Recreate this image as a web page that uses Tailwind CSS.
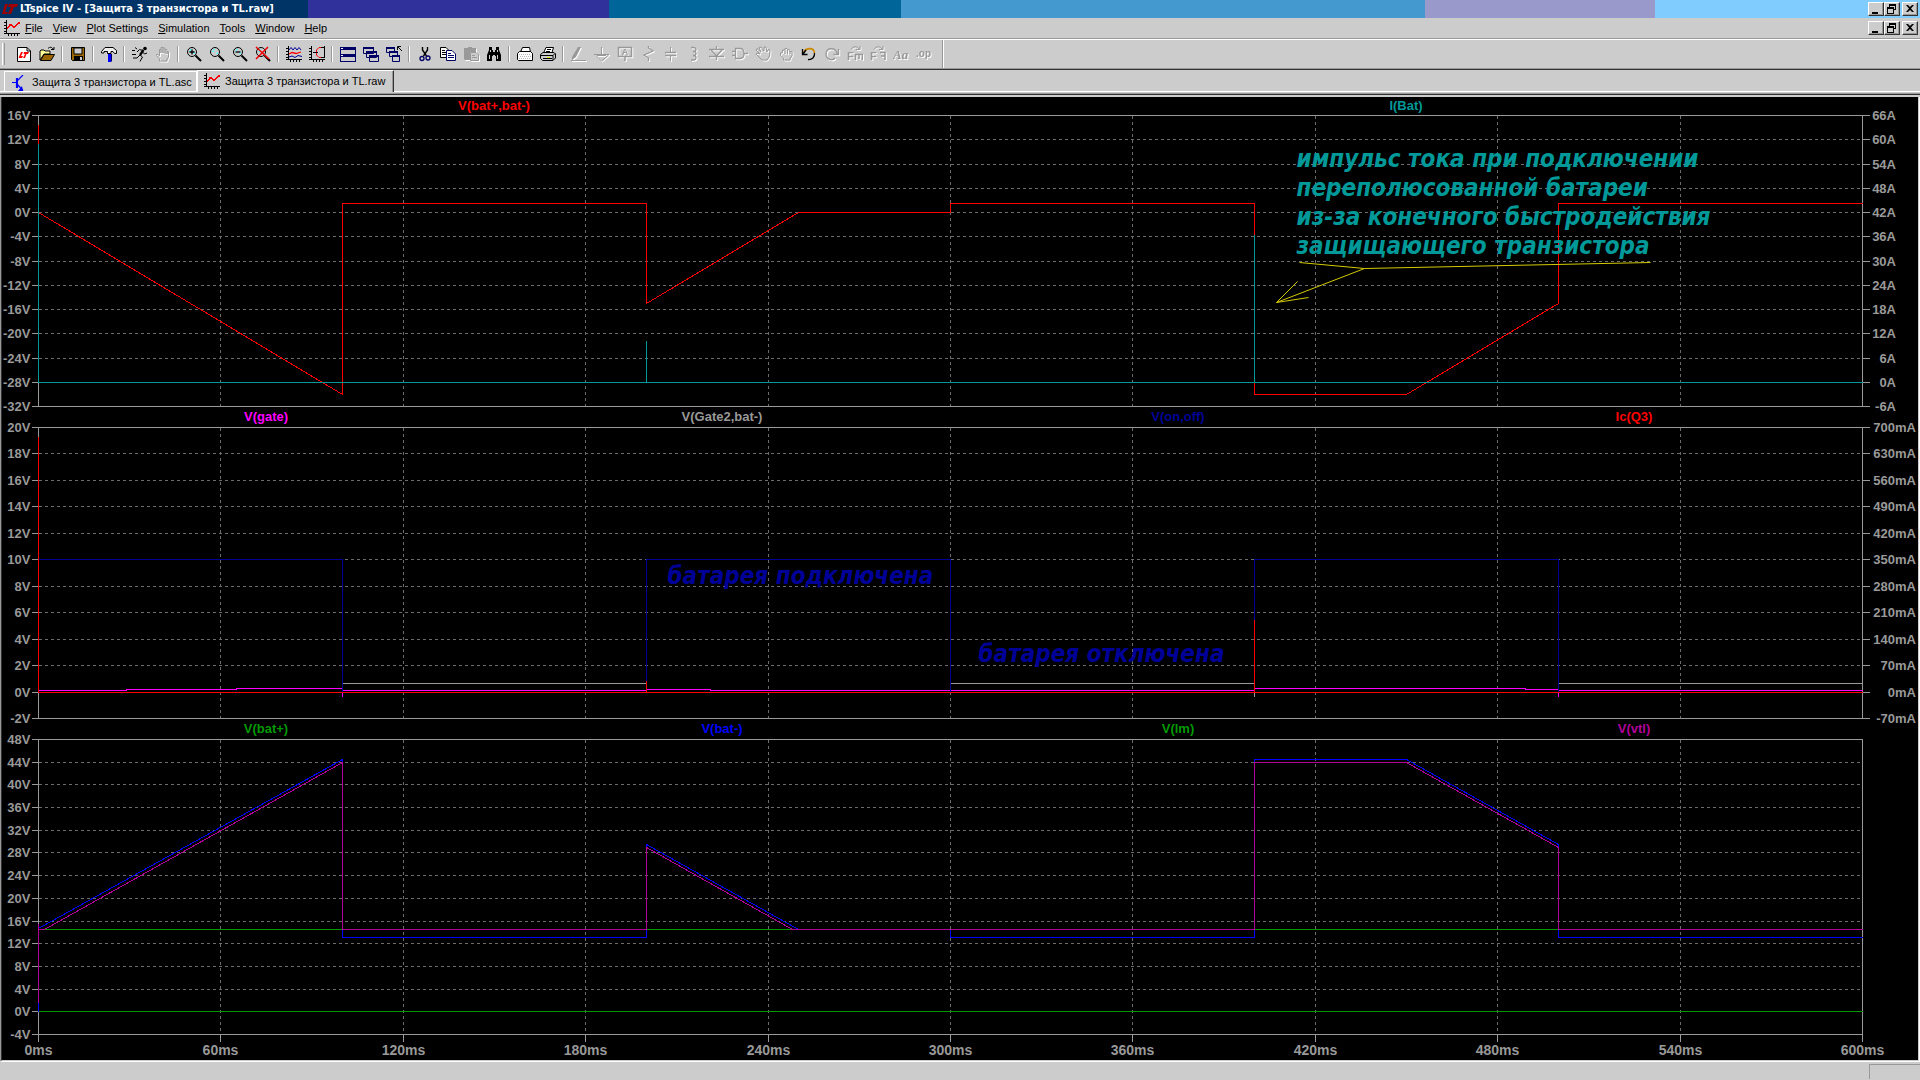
<!DOCTYPE html>
<html lang="ru">
<head>
  <meta charset="UTF-8" />
  <meta name="viewport" content="width=device-width, initial-scale=1.0" />
  <title>LTspice IV - [Защита 3 транзистора и TL.raw]</title>
  <script src="https://cdn.jsdelivr.net/npm/@tailwindcss/browser@4"></script>
</head>
<body class="bg-[#cccccc] text-black font-['Liberation_Sans',sans-serif] text-[11px]">

  <!-- Shared icons -->
  <svg class="hidden" aria-hidden="true">
    <symbol id="i-wave" viewBox="0 0 16 16">
      <path d="M2.500 0V14M0 2.500H2M0 5.500H2M0 8.500H2M0 11.500H2M0 13.500H16M4.500 14V16M7.500 14V16M10.500 14V16M13.500 14V16" stroke="#000" fill="none" />
      <path d="M3 8L4 7.500L6 5L7 4.500L8 5.500L10 7L12 5.500L14 3.500L16 2.500" stroke="#f00" stroke-width="1.500" fill="none" />
    </symbol>
    <symbol id="i-lens" viewBox="0 0 16 16">
      <circle cx="6" cy="6" r="4.500" fill="#ccc" stroke="#000" />
      <path d="M3 5H4V3H6V4H5V6H3ZM7 8H9V6H8V7H7Z" fill="#6ff" />
      <path d="M9.500 9.500L15 15" stroke="#000" stroke-width="2" />
    </symbol>
    <symbol id="i-hand" viewBox="0 0 16 16">
      <path d="M4.500 15V13L1.500 9.500V8.500H3L4.500 10V3.500H6V7V1.500H8V7V2H10V7.500V3.500H12V8V5.500H13.500V11L12 13V15Z" fill="none" stroke="currentColor" />
    </symbol>
    <symbol id="i-min" viewBox="0 0 12 10"><path d="M2 8H8V10H2Z" /></symbol>
    <symbol id="i-restore" viewBox="0 0 12 10">
      <path d="M3 0H10V6H8V5H9V2H4V3H3ZM1 3H8V10H1ZM2 5V9H7V5Z" fill-rule="evenodd" />
    </symbol>
    <symbol id="i-close" viewBox="0 0 12 10"><path d="M2 1H4L6 3L8 1H10L7 4.500L10 8H8L6 6L4 8H2L5 4.500Z" /></symbol>
  </svg>

  <div class="flex h-screen min-h-[600px] flex-col overflow-hidden">

    <!-- Title bar -->
    <header class="flex h-[18px] shrink-0 items-center bg-[linear-gradient(90deg,#003366_16.04%,#31319c_16.04%_31.72%,#006699_31.72%_46.93%,#4499cf_46.93%_74.22%,#9999cc_74.22%_86.2%,#80ccff_86.2%)] pl-0.5 pr-0.5">
      <svg class="mr-0.5 h-4 w-4" viewBox="0 0 16 16" fill="#a00000">
        <path d="M3 3H6L3 11H6L5 13H0ZM7 3H16L15 6H12L9 13H6L9 6H6Z" />
      </svg>
      <h1 class="flex-1 truncate font-['DejaVu_Sans_Condensed','DejaVu_Sans',sans-serif] text-[11px] font-bold text-white">LTspice IV - [Защита 3 транзистора и TL.raw]</h1>
      <div class="flex">
        <button aria-label="Minimize" class="h-3.5 w-4 border border-white border-b-[#333] border-r-[#333] bg-[#cccccc] p-px shadow-[inset_-1px_-1px_0_#999]"><svg class="h-2.5 w-3"><use href="#i-min" /></svg></button>
        <button aria-label="Restore" class="h-3.5 w-4 border border-white border-b-[#333] border-r-[#333] bg-[#cccccc] p-px shadow-[inset_-1px_-1px_0_#999]"><svg class="h-2.5 w-3"><use href="#i-restore" /></svg></button>
        <button aria-label="Close" class="ml-0.5 h-3.5 w-4 border border-white border-b-[#333] border-r-[#333] bg-[#cccccc] p-px shadow-[inset_-1px_-1px_0_#999]"><svg class="h-2.5 w-3"><use href="#i-close" /></svg></button>
      </div>
    </header>

    <!-- Menu -->
    <nav class="flex h-[21px] shrink-0 items-center border-b border-[#999] pl-1 pr-0.5">
      <svg class="mr-[5px] h-4 w-4" shape-rendering="crispEdges"><use href="#i-wave" /></svg>
      <div class="flex flex-1 gap-2.5">
        <button><u>F</u>ile</button>
        <button><u>V</u>iew</button>
        <button><u>P</u>lot Settings</button>
        <button><u>S</u>imulation</button>
        <button><u>T</u>ools</button>
        <button><u>W</u>indow</button>
        <button><u>H</u>elp</button>
      </div>
      <div class="flex">
        <button aria-label="Minimize plot" class="h-3.5 w-4 border border-white border-b-[#333] border-r-[#333] p-px shadow-[inset_-1px_-1px_0_#999]"><svg class="h-2.5 w-3"><use href="#i-min" /></svg></button>
        <button aria-label="Restore plot" class="h-3.5 w-4 border border-white border-b-[#333] border-r-[#333] p-px shadow-[inset_-1px_-1px_0_#999]"><svg class="h-2.5 w-3"><use href="#i-restore" /></svg></button>
        <button aria-label="Close plot" class="ml-0.5 h-3.5 w-4 border border-white border-b-[#333] border-r-[#333] p-px shadow-[inset_-1px_-1px_0_#999]"><svg class="h-2.5 w-3"><use href="#i-close" /></svg></button>
      </div>
    </nav>

    <!-- Toolbar -->
    <div class="flex h-[30px] shrink-0 items-center border-b border-t border-b-[#999] border-t-white pl-0.5 [&>button]:flex [&>button]:h-6 [&>button]:w-[23px] [&>button]:shrink-0 [&>button]:items-center [&>button]:justify-center [&>button>svg]:h-4 [&>button>svg]:w-4 [&>i]:mx-[3px] [&>i]:h-4 [&>i]:w-0.5 [&>i]:shrink-0 [&>i]:border-l [&>i]:border-r [&>i]:border-l-[#999] [&>i]:border-r-white [&>button:disabled]:text-[#999] [&>button:disabled>svg]:drop-shadow-[1px_1px_0_#fff]">
      <span class="mr-[7px] h-[22px] w-[3px] border-l border-r border-l-white border-r-[#999]"></span>
      <button aria-label="New schematic"><svg viewBox="0 0 16 16"><path d="M1.500 1.500H11L14.500 5V15.500H1.500Z" fill="#fff" stroke="#000" /><path d="M11 1.500V5H14.500" fill="none" stroke="#000" /><path d="M5 6H7L5 10H7L6 12H2.500ZM8 6H13L12 8H10.500L9 12H7L9 8H7.500Z" fill="#f00" /></svg></button>
      <button aria-label="Open"><svg viewBox="0 0 16 16"><path d="M1 14V5L2 4H5L6 5H11V8H5Z" fill="#ffff99" stroke="#000" /><path d="M1.500 14.500L5 8.500H15.500L12 14.500Z" fill="#996600" stroke="#000" /><path d="M9 2.500C11 0.500 13 1 14.500 3.500M12 3.500H15V1" fill="none" stroke="#000" /></svg></button>
      <i></i>
      <button aria-label="Save"><svg viewBox="0 0 16 16"><path d="M1.500 1.500H14.500V14.500H2.500L1.500 13.500Z" fill="#996600" stroke="#000" /><path d="M4 2H12V8H4Z" fill="#ccc" stroke="#000" /><path d="M4 10H13V15H4Z" /><path d="M10 11H12V14H10Z" fill="#ccc" /></svg></button>
      <i></i>
      <button aria-label="Control panel"><svg viewBox="0 0 16 16"><path d="M.500 5.500L4 1.500H12L15.500 4.500V7.500H13.500L12 5.500H10V7.500H6.500V5.500H3V7H.500Z" fill="#eee" stroke="#000" /><path d="M7 8H10V16H7Z" fill="#00f" /><path d="M10.500 8V15.500" stroke="#006" /></svg></button>
      <i></i>
      <button aria-label="Run"><svg viewBox="0 0 16 16"><circle cx="13" cy="2.500" r="1.800" /><path d="M11.500 4L8 9" stroke="#000" stroke-width="2.200" /><path d="M8 9L10.500 11L8 15.500M8 9L5 12H1M11 4.500L7.500 3.500L5 6M10.500 6L12.500 8L15 7M3 1.500L5 3M0 4.500H3M0 8.500H4" fill="none" stroke="#000" /></svg></button>
      <button aria-label="Halt" disabled><svg><use href="#i-hand" /></svg></button>
      <i></i>
      <button aria-label="Zoom in"><svg viewBox="0 0 16 16"><use href="#i-lens" /><path d="M6 3.500V8.500M3.500 6H8.500" stroke="#000" stroke-width="1.300" /></svg></button>
      <button aria-label="Pan"><svg><use href="#i-lens" /></svg></button>
      <button aria-label="Zoom out"><svg viewBox="0 0 16 16"><use href="#i-lens" /><path d="M3.500 6H8.500" stroke="#000" stroke-width="1.300" /></svg></button>
      <button aria-label="Zoom full extents"><svg viewBox="0 0 16 16"><use href="#i-lens" /><path d="M1 1L14 13M13 1L1 13" stroke="#e00" stroke-width="1.500" /></svg></button>
      <i></i>
      <button aria-label="Autorange Y"><svg viewBox="0 0 16 16" fill="none"><path d="M2.500 0V14M0 2.500H2M0 5.500H2M0 8.500H2M0 11.500H2M0 13.500H16M4.500 14V16M7.500 14V16M10.500 14V16M13.500 14V16" stroke="#000" /><path d="M3 4L5 1.500L7 4L9 1.500L11 4L13 1.500L15 4M3 11L6 10L9 11.500L12 9.500L16 10.500" stroke="#009" /><path d="M3 8L6 6.500L10 7.500L15 6" stroke="#f00" stroke-width="1.300" /></svg></button>
      <button aria-label="Plot settings"><svg viewBox="0 0 16 16" fill="none"><path d="M2.500 0V14M0 2.500H2M0 5.500H2M0 8.500H2M0 11.500H2M0 13.500H16M4.500 14V16M7.500 14V16M10.500 14V16M13.500 14V16" stroke="#000" /><path d="M12 1.500H10L7.500 4V9L10 11.500H12" stroke="#f00" /><path d="M15.500 0V12M4 6.500H9M12 1.500H15M12 11.500H15" stroke="#000" /></svg></button>
      <i></i>
      <button aria-label="Tile windows"><svg viewBox="0 0 16 16"><path d="M0 1H16V16H0Z" fill="#006" /><path d="M1 4H15V8H1ZM1 11H15V15H1Z" fill="#ccc" /><path d="M1 2H3V3H1ZM1 9H3V10H1Z" fill="#fff" /></svg></button>
      <button aria-label="Cascade windows"><svg viewBox="0 0 16 16" fill="#ccc" stroke="#006"><path d="M.500 1.500H10.500V7.500H.500ZM3.500 5.500H13.500V11.500H3.500ZM6.500 9.500H15.500V15.500H6.500Z" /><path d="M0 2H11M3 6H14M6 10H16" stroke-width="2" /></svg></button>
      <button aria-label="Close all windows"><svg viewBox="0 0 16 16" fill="#ccc" stroke="#006"><path d="M.500 1.500H8.500V6.500H.500ZM3.500 5.500H11.500V10.500H3.500ZM6.500 9.500H13.500V15.500H6.500Z" /><path d="M0 2H9M3 6H12M6 10H14" stroke-width="2" /><path d="M11.500 4V.500H15M12 1L16 5" fill="none" stroke="#000" /></svg></button>
      <i></i>
      <button aria-label="Cut"><svg viewBox="0 0 16 16" fill="none"><path d="M5.500 1V4L9.500 10M10.500 1V4L6.500 10" stroke="#000" stroke-width="1.400" /><circle cx="5" cy="12.500" r="2" stroke="#006" stroke-width="1.300" /><circle cx="11" cy="12" r="2" stroke="#006" stroke-width="1.300" /></svg></button>
      <button aria-label="Copy"><svg viewBox="0 0 16 16" fill="#fff"><path d="M.500 1.500H6L8.500 4V11.500H.500Z" stroke="#000" /><path d="M2 4.500H5M2 6.500H7M2 8.500H7" stroke="#000" /><path d="M6.500 4.500H12L15.500 8V14.500H6.500Z" stroke="#006" /><path d="M8 7.500H11M8 9.500H14M8 11.500H14" stroke="#006" /></svg></button>
      <button aria-label="Paste" disabled><svg viewBox="0 0 16 16"><path d="M1 2H5V1H9V2H13V6H7V14H2L1 13Z" fill="currentColor" /><path d="M7.500 6.500H13L15.500 9V14.500H7.500Z" fill="#ccc" stroke="currentColor" /><path d="M9 9.500H12M9 11.500H14M4 4.500H10" stroke="currentColor" /></svg></button>
      <button aria-label="Find"><svg viewBox="0 0 16 16"><path d="M3 1H6V4H7V6H9V4H10V1H13V4L15 9V15H10V10H9V9H7V10H6V15H1V9L3 4Z" /><path d="M3 9H4V13H3ZM11 9H12V13H11ZM4 4H5V6H4ZM11 4H12V6H11Z" fill="#ccc" /></svg></button>
      <i></i>
      <button aria-label="Print setup"><svg viewBox="0 0 16 16"><path d="M3.500 6L5.500 1.500H12.500L13.500 6M.500 7.500L2.500 5.500H13.500L15.500 7.500V14.500H1.500L.500 13.500Z" fill="#fff" stroke="#000" /><path d="M2 8.500H14M3 10.500H14M2 12.500H14" stroke="#bbb" stroke-dasharray="1 1" /></svg></button>
      <button aria-label="Print"><svg viewBox="0 0 16 16"><path d="M4 6L6 1.500H13.500L12 6.500" fill="#fff" stroke="#000" /><path d="M.500 8.500L3 6.500H14L15.500 8V12L13 14.500H2.500L.500 12.500Z" fill="#ccc" stroke="#000" /><path d="M1 9.500H13V14M13 9.500L15 7.500M7 3.500H11M6 5.500H10M3 12.500H12" fill="none" stroke="#000" /><path d="M7 11H10V12H7Z" fill="#ee0" /></svg></button>
      <i></i>
      <button aria-label="Wire" disabled><svg viewBox="0 0 16 16"><path d="M0 14.500H15" stroke="currentColor" /><path d="M7 1H10L5 11L1 14V11Z" fill="currentColor" /></svg></button>
      <button aria-label="Ground" disabled><svg viewBox="0 0 16 16"><path d="M7.500 1V8M0 8.500H15L7.500 15L1 8.500M3 9.500H12" fill="none" stroke="currentColor" /></svg></button>
      <button aria-label="Label net" disabled><svg viewBox="0 0 16 16"><path d="M1.500 1.500H14.500V10.500H1.500ZM8 11V15" fill="none" stroke="currentColor" stroke-width="1.500" /><text x="8" y="9" text-anchor="middle" font-size="9" font-weight="bold" fill="currentColor">A</text></svg></button>
      <button aria-label="Resistor" disabled><svg viewBox="0 0 16 16"><path d="M8.500 0V2L13 5L4 9L8.500 12V15" fill="none" stroke="currentColor" stroke-width="1.300" /></svg></button>
      <button aria-label="Capacitor" disabled><svg viewBox="0 0 16 16"><path d="M7.500 1V6M7.500 10V15" stroke="currentColor" /><path d="M2 6.500H13M2 9.500H13" stroke="currentColor" stroke-width="1.500" /></svg></button>
      <button aria-label="Inductor" disabled><svg viewBox="0 0 16 16"><path d="M5 1.500H7C11 1.500 11 5.500 7 5.500C11 5.500 11 9.500 7 9.500C11 9.500 11 14 7 14H5" fill="none" stroke="currentColor" stroke-width="1.300" /></svg></button>
      <button aria-label="Diode" disabled><svg viewBox="0 0 16 16"><path d="M7.500 0V4M7.500 10V14M0 3.500H15M0 10.500H15M2 4L7.500 10L13 4" fill="none" stroke="currentColor" stroke-width="1.300" /></svg></button>
      <button aria-label="Component" disabled><svg viewBox="0 0 16 16"><path d="M3.500 2.500H8C11 2.500 12 5 12 7.500S11 12.500 8 12.500H3.500ZM0 5.500H3M0 9.500H3M12 7.500H16" fill="none" stroke="currentColor" stroke-width="1.300" /></svg></button>
      <button aria-label="Move" disabled><svg viewBox="0 0 16 16"><path d="M7 14L3 10L1 8L2 7L5 8L1 4L2 2.500L6 6L4 1.500L6 1L9 5L9 1L11 1L12 6L13 3.500L15 4L14.500 10L12 14Z" fill="none" stroke="currentColor" /></svg></button>
      <button aria-label="Drag" disabled><svg viewBox="0 0 16 16"><path d="M5.500 14V12L2.500 9.500V7L4.500 6.500V4H6.500L7 2.500H9L9.500 3.500H11.500L12 5.500H14V10L12 12V14Z" fill="none" stroke="currentColor" /><path d="M7 4V8M9.500 4V8M12 5V8" stroke="currentColor" /></svg></button>
      <button aria-label="Undo"><svg viewBox="0 0 16 16" fill="none"><path d="M2 8C4 1 13 1 13.500 7" stroke="#c80" stroke-width="1.600" /><path d="M1.500 3V8.500H6.500M13.500 7C14 11 11 14 7 13.500M2 8L5 4" stroke="#000" stroke-width="1.300" /></svg></button>
      <button aria-label="Redo" disabled><svg viewBox="0 0 16 16" fill="none"><path d="M13.500 8C12 1 2 1 2 8C2 14 9 15 11 12M14.500 3V8.500H9.500" stroke="currentColor" stroke-width="1.400" /></svg></button>
      <button aria-label="Rotate" disabled><svg viewBox="0 0 16 16"><path d="M4 3.500C6 0 10 0 12 3M13 0V3.500H9" fill="none" stroke="currentColor" /><text y="14" font-size="11" font-weight="bold" fill="currentColor">F</text><path d="M8 8.500H16M8.500 8V14M12 8V13M15.500 8V14" fill="none" stroke="currentColor" stroke-width="1.500" /></svg></button>
      <button aria-label="Mirror" disabled><svg viewBox="0 0 16 16"><path d="M4 3.500C6 0 10 0 12 3M13 0V3.500H9" fill="none" stroke="currentColor" /><text y="14" font-size="11" font-weight="bold" fill="currentColor">F</text><path d="M10 6.500H15V14M11 10H15" fill="none" stroke="currentColor" stroke-width="1.500" /></svg></button>
      <button aria-label="Text" disabled><svg viewBox="0 0 16 16"><text y="13" font-size="13" font-style="italic" font-weight="bold" font-family="Liberation Serif" fill="currentColor">Aa</text></svg></button>
      <button aria-label="SPICE directive" disabled><svg viewBox="0 0 16 16"><text y="11" font-size="10" font-weight="bold" fill="currentColor">.op</text></svg></button>
      <span class="ml-[7px] h-full w-0.5 border-l border-r border-l-[#999] border-r-white"></span>
    </div>

    <!-- Document tabs -->
    <div class="flex h-[23px] shrink-0 items-end border-b border-t border-b-white border-t-[#333] pl-1">
      <a href="#" class="flex h-5 w-[193px] items-center border border-b-0 border-white pl-1.5 pt-0.5">
        <svg class="mr-[5px] h-4 w-4 shrink-0" viewBox="0 0 16 16"><path d="M5.500 3V13M1 7.500H5M6 6L12 0M6 9L12 15.500" fill="none" stroke="#00f" stroke-width="1.200" /><path d="M5 3H7V13H5ZM12 16H7L11 11Z" fill="#00f" /></svg>
        <span class="whitespace-nowrap">Защита 3 транзистора и TL.asc</span>
      </a>
      <a href="#" class="-mb-px flex h-[22px] w-[197px] items-center border-l border-r border-t border-l-white border-r-[#333] border-t-white bg-[#cccccc] pb-px pl-1.5 shadow-[inset_-1px_0_0_#999]">
        <svg class="mr-[5px] h-4 w-4 shrink-0" shape-rendering="crispEdges"><use href="#i-wave" /></svg>
        <span class="whitespace-nowrap">Защита 3 транзистора и TL.raw</span>
      </a>
    </div>
    <div class="mt-px h-1 shrink-0 border-t border-[#999]"><div class="border-t border-[#333]"></div></div>

    <!-- Waveform window -->
    <main class="flex min-h-0 flex-1 flex-col border-b border-l border-r border-b-white border-l-[#999] border-r-white">
      <div class="flex min-h-0 flex-1 flex-col border-b border-l border-r border-b-[#ccc] border-l-[#333] border-r-[#ccc] bg-black text-[13px] font-bold">
        <div class="grid h-[18px] shrink-0 grid-cols-2 pl-9 pr-14 text-center leading-[18px]">
          <span class="text-[#ff0000]">V(bat+,bat-)</span>
          <span class="text-[#009999]">I(Bat)</span>
        </div>
        <svg id="pane1" class="block min-h-0 w-full flex-[73_1_0%] overflow-visible"></svg>

        <div class="grid h-5 shrink-0 grid-cols-4 pl-9 pr-14 text-center leading-5">
          <span class="text-[#ff00ff]">V(gate)</span>
          <span class="text-[#999999]">V(Gate2,bat-)</span>
          <span class="text-[#000099]">V(on,off)</span>
          <span class="text-[#ff0000]">Ic(Q3)</span>
        </div>
        <svg id="pane2" class="block min-h-0 w-full flex-[73_1_0%] overflow-visible"></svg>

        <div class="grid h-5 shrink-0 grid-cols-4 pl-9 pr-14 text-center leading-5">
          <span class="text-[#009900]">V(bat+)</span>
          <span class="text-[#0000ff]">V(bat-)</span>
          <span class="text-[#009900]">V(lm)</span>
          <span class="text-[#b20099]">V(vtl)</span>
        </div>
        <svg id="pane3" class="block min-h-0 w-full flex-[74_1_0%] overflow-visible"></svg>
        <div class="h-[25px] shrink-0"></div>
      </div>
    </main>

    <!-- Status bar -->
    <footer class="flex h-[18px] shrink-0 justify-end pt-0.5">
      <div class="mb-px w-[51px] border-l border-t border-[#999]"></div>
    </footer>
  </div>

  <script>
    const NS = 'http://www.w3.org/2000/svg';
    const LEFT = 36, RIGHT = 55, T_END = 600;

    // traces are [ms, value] points; scale converts right-axis units to left-axis units
    const panes = [
      {
        id: 'pane1', max: 16, min: -32, step: 4, right: { max: 66, step: 6, unit: 'A', inset: 22 },
        traces: [
          { color: '#ff0000', pts: [[0,11.6],[0,0],[100,-30],[100,1.5],[200,1.5],[200,-15],[250,0],[300,0],[300,1.5],[400,1.5],[400,-30],[450,-30],[500,-15],[500,1.5],[600,1.5]] },
          { color: '#ff0000', pts: [[0,14.5],[0,11.6]] },
          { color: '#009999', scale: a => a / 1.5 - 28, pts: [[0,59],[0,0],[200,0],[200,10.4],[200,0],[400,0],[400,36.6],[400,0],[600,0]] }
        ],
        arrow: [[[414.8,-8.2],[436.2,-9.3],[530.3,-8.2]], [[436.2,-9.3],[407.1,-14.8],[414.3,-11.4]], [[407.1,-14.8],[417.8,-14]]],
        notes: [{ t: 413.8, v: 7.55, color: '#009999', lines: ['импульс тока при подключении', 'переполюсованной батареи', 'из-за конечного быстродействия', 'защищающего транзистора'] }]
      },
      {
        id: 'pane2', max: 20, min: -2, step: 2, right: { max: 700, step: 70, unit: 'mA', inset: 2 },
        traces: [
          { color: '#999999', pts: [[0,0],[100,0],[100,0.61],[200,0.61],[200,0],[300,0],[300,0.61],[400,0.61],[400,-0.35],[400,0],[500,0],[500,0.61],[600,0.61]] },
          { color: '#ff00ff', pts: [[0,0.15],[29,0.15],[29,0.23],[65,0.23],[65,0.3],[100,0.3],[100,-0.35],[100,0.15],[200,0.15],[200,0.23],[221,0.23],[221,0.15],[400,0.15],[400,0.3],[489,0.3],[489,0.23],[500,0.23],[500,-0.35],[500,0.15],[600,0.15]] },
          { color: '#000099', pts: [[0,10],[100,10],[100,0],[200,0],[200,10],[300,10],[300,0],[400,0],[400,10],[500,10],[500,0],[600,0]] },
          { color: '#ff0000', scale: a => a / 35, pts: [[0,677],[0,0],[200,0],[200,30],[200,0],[400,0],[400,192],[400,0],[600,0]] }
        ],
        notes: [
          { t: 206.8, v: 8.2, color: '#000099', lines: ['батарея подключена'] },
          { t: 309.2, v: 2.3, color: '#000099', lines: ['батарея отключена'] }
        ]
      },
      {
        id: 'pane3', max: 48, min: -4, step: 4, timeAxis: true,
        traces: [
          { color: '#009900', pts: [[0,14.5],[600,14.5]] },
          { color: '#0000ff', pts: [[0,0],[0,14.6],[100,44.5],[100,13.1],[200,13.1],[200,29.5],[250,14.5],[300,14.5],[300,13.1],[400,13.1],[400,44.5],[450,44.5],[500,29.5],[500,13.1],[600,13.1]] },
          { color: '#009900', pts: [[0,0],[600,0]] },
          { color: '#b20099', pts: [[0,1.7],[0,15.5]] },
          { color: '#b20099', pts: [[0,14.5],[2,14.5],[100,43.9],[100,14.5],[200,14.5],[200,28.9],[248,14.5],[400,14.5],[400,44],[450,44],[500,29],[500,14.5],[600,14.5]] }
        ]
      }
    ];

    function add(svg, tag, attrs, text) {
      const el = document.createElementNS(NS, tag);
      for (const k in attrs) el.setAttribute(k, attrs[k]);
      if (text) el.textContent = text;
      svg.appendChild(el);
    }

    function drawPane(p) {
      const svg = document.getElementById(p.id);
      svg.replaceChildren();
      const box = svg.getBoundingClientRect();
      const w = box.width - LEFT - RIGHT - 1, h = box.height - 1;
      const x = t => Math.round(LEFT + t / T_END * w) + 0.5;
      const y = v => Math.round((p.max - v) / (p.max - p.min) * h) + 0.5;
      const line = (pts, color, extra) => add(svg, 'polyline', {
        points: pts.join(' '), fill: 'none', stroke: color, 'shape-rendering': 'crispEdges', ...extra
      });
      const dash = { 'stroke-dasharray': '3 3' };
      const x0 = x(0), x1 = x(T_END), y0 = y(p.max), y1 = y(p.min);

      for (let t = 60; t < T_END; t += 60) line([[x(t), y0], [x(t), y1]], '#6c6c6c', dash);
      for (let v = p.max, i = 0; v >= p.min; v -= p.step, i++) {
        const yy = y(v);
        if (v < p.max && v > p.min) line([[x0, yy], [x1, yy]], '#6c6c6c', dash);
        line([[x0 - 7, yy], [x0, yy]], '#999999');
        add(svg, 'text', { x: x0 - 8, y: yy + 4.5, 'text-anchor': 'end', fill: '#999999' }, v + 'V');
        if (p.right) {
          line([[x1, yy], [x1 + 7, yy]], '#999999');
          add(svg, 'text', { x: box.width - p.right.inset, y: yy + 4.5, 'text-anchor': 'end', fill: '#999999' },
            p.right.max - i * p.right.step + p.right.unit);
        }
      }
      line([[x0, y0], [x1, y0], [x1, y1], [x0, y1], [x0, y0], [x1, y0]], '#999999');

      if (p.timeAxis) {
        for (let t = 0; t <= T_END; t += 60) {
          line([[x(t), y1], [x(t), y1 + 7]], '#999999');
          add(svg, 'text', { x: x(t), y: y1 + 20.5, 'text-anchor': 'middle', fill: '#999999', class: 'text-sm' }, t + 'ms');
        }
      }

      for (const tr of p.traces) {
        const f = tr.scale || (v => v);
        line(tr.pts.map(([t, v]) => [x(t), y(f(v))]), tr.color, { 'stroke-linejoin': 'bevel' });
      }
      for (const seg of p.arrow || []) {
        line(seg.map(([t, v]) => [x(t), y(v)]), '#d4cc00', { 'shape-rendering': 'auto' });
      }
      for (const n of p.notes || []) {
        n.lines.forEach((s, i) => add(svg, 'text', {
          x: x(n.t), y: y(n.v) + i * 29, fill: n.color,
          class: "font-['DejaVu_Sans_Condensed','DejaVu_Sans',sans-serif] text-[24px] font-bold italic"
        }, s));
      }
    }

    // redraw whenever a pane gets a new size
    const observer = new ResizeObserver(() => panes.forEach(drawPane));
    panes.forEach(p => observer.observe(document.getElementById(p.id)));
  </script>
</body>
</html>
